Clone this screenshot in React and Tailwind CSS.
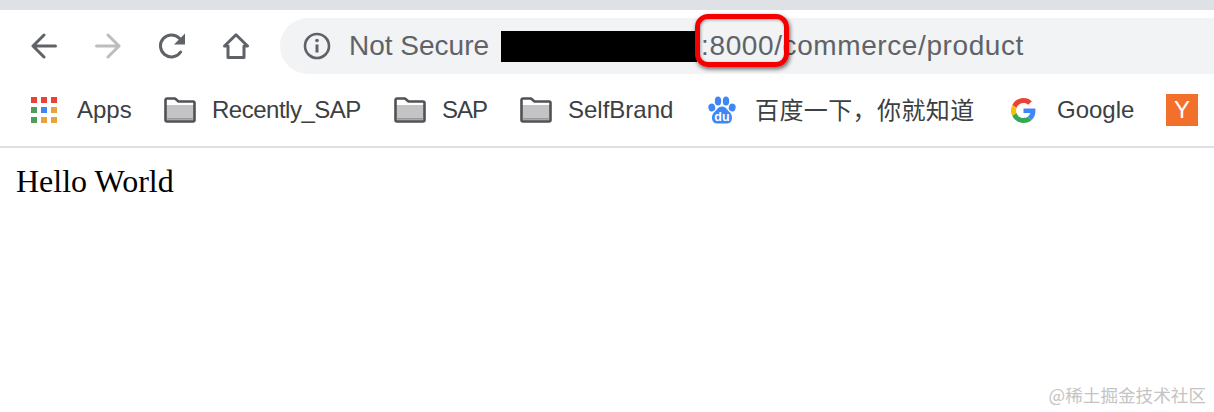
import React from "react";

function NavArrow({ flip, color }) {
    return (
        <svg width="26" height="26" viewBox="0 0 26 26" fill="none" stroke={color} strokeWidth="3" strokeLinecap="round" strokeLinejoin="round" className={flip ? "-scale-x-100" : ""}>
            <path d="M2 13H24.5M13 2L2 13L13 24" />
        </svg>
    );
}

function Folder() {
    return (
        <svg width="32" height="26" viewBox="0 0 32 26" className="shrink-0">
            <path d="M1.5 8H30.5V23A1.5 1.5 0 0 1 29 24.5H3A1.5 1.5 0 0 1 1.5 23Z" fill="#c4c4c4" />
            <path d="M1.5 3A1.5 1.5 0 0 1 3 1.5H11L14.5 4.5H29A1.5 1.5 0 0 1 30.5 6V23A1.5 1.5 0 0 1 29 24.5H3A1.5 1.5 0 0 1 1.5 23Z" fill="none" stroke="#4f5256" strokeWidth="2.6" strokeLinejoin="round" />
            <path d="M2.8 21.8H29.2" stroke="#9a9a9a" strokeWidth="1.6" />
        </svg>
    );
}

function AppsGrid() {
    const colors = ["bg-[#ea4335]", "bg-[#ea4335]", "bg-[#ea4335]", "bg-[#4f9d5d]", "bg-[#4285f4]", "bg-[#e8a33d]", "bg-[#4f9d5d]", "bg-[#e8a33d]", "bg-[#e8a33d]"];
    return (
        <div className="grid grid-cols-3 gap-1 w-[26px] shrink-0">
            {colors.map((c, i) => (
                <div key={i} className={"w-[6px] h-[6px] " + c}></div>
            ))}
        </div>
    );
}

function BaiduIcon() {
    return (
        <svg width="28" height="28" viewBox="0 0 28 28" className="shrink-0">
            <g fill="#3f87f5">
                <ellipse cx="3.8" cy="11.5" rx="3.4" ry="4" transform="rotate(-15 3.8 11.5)" />
                <ellipse cx="10" cy="5" rx="3.2" ry="4.6" />
                <ellipse cx="18" cy="5" rx="3.2" ry="4.6" />
                <ellipse cx="24.2" cy="11.5" rx="3.4" ry="4" transform="rotate(15 24.2 11.5)" />
                <path d="M14 10.5C18 10.5 19 14 22 16.5C25 19 25 27 19.5 27.5H8.5C3 27 3 19 6 16.5C9 14 10 10.5 14 10.5Z" />
            </g>
            <text x="14" y="25" textAnchor="middle" fill="#fff" fontSize="12.5" fontWeight="700" fontFamily="Liberation Sans, sans-serif">du</text>
        </svg>
    );
}

function GoogleIcon() {
    return (
        <svg width="25" height="25" viewBox="0 0 48 48" className="shrink-0">
            <path fill="#EA4335" d="M24 9.5c3.54 0 6.71 1.22 9.21 3.6l6.85-6.85C35.9 2.38 30.47 0 24 0 14.62 0 6.51 5.38 2.56 13.22l7.98 6.19C12.43 13.72 17.74 9.5 24 9.5z" />
            <path fill="#4285F4" d="M46.98 24.55c0-1.57-.15-3.09-.38-4.55H24v9.02h12.94c-.58 2.96-2.26 5.48-4.78 7.18l7.73 6c4.51-4.18 7.09-10.36 7.09-17.65z" />
            <path fill="#FBBC05" d="M10.53 28.59c-.48-1.45-.76-2.99-.76-4.59s.27-3.14.76-4.59l-7.98-6.19C.92 16.46 0 20.12 0 24c0 3.88.92 7.54 2.56 10.78l7.97-6.19z" />
            <path fill="#34A853" d="M24 48c6.48 0 11.93-2.13 15.89-5.81l-7.73-6c-2.15 1.45-4.92 2.3-8.16 2.3-6.26 0-11.57-4.22-13.47-9.91l-7.98 6.19C6.51 42.62 14.62 48 24 48z" />
        </svg>
    );
}

export default function App() {
    return (
        <div className="relative w-[1214px] h-[412px] overflow-hidden bg-white font-['Liberation_Sans',sans-serif]">
            {/* Tab strip edge */}
            <div className="h-[10px] bg-[#dee1e6]"></div>

            {/* Toolbar */}
            <div className="h-[74px] pt-2 pl-[31px] flex items-start">
                <div className="h-14 flex items-center gap-[38px]">
                    <NavArrow color="#5f6368" />
                    <NavArrow flip color="#bcbdbf" />
                    <svg width="28" height="28" viewBox="0 0 28 28" fill="none" className="-ml-px -mr-px">
                        <path d="M22.6 20A11 11 0 1 1 21.6 6.5" stroke="#5f6368" strokeWidth="3" strokeLinecap="round" />
                        <path d="M27 1.5V12.5H16Z" fill="#5f6368" />
                    </svg>
                    <svg width="26" height="26" viewBox="0 0 26 26" fill="none" stroke="#5f6368" strokeWidth="3" strokeLinejoin="round">
                        <path d="M1.5 13L13 1.8L24.5 13H21V24.5H5V13Z" />
                    </svg>
                </div>

                {/* Omnibox */}
                <div className="ml-[31px] flex-1 h-14 rounded-l-[28px] bg-[#f1f3f4] pl-[23px] flex items-center text-[28px] text-[#5f6368]">
                    <svg width="28" height="28" viewBox="0 0 28 28" fill="none" className="shrink-0">
                        <circle cx="14" cy="14" r="12" stroke="#5f6368" strokeWidth="2.6" />
                        <path d="M14 12.5V20.5" stroke="#5f6368" strokeWidth="3" />
                        <circle cx="14" cy="8.5" r="1.8" fill="#5f6368" />
                    </svg>
                    <span className="ml-[18px] whitespace-nowrap">Not Secure</span>
                    <div className="ml-[12px] w-[196px] h-[31px] bg-black shrink-0"></div>
                    <span className="ml-[4px] whitespace-nowrap tracking-[0.6px]">:8000/commerce/product</span>
                </div>
            </div>

            {/* Bookmarks bar */}
            <div className="h-16 pb-[10px] border-b-2 border-[#dfdfe5] pl-[31px] flex items-center text-[24px] text-[#3c4043] whitespace-nowrap">
                <AppsGrid />
                <span className="ml-5 w-[55px]">Apps</span>
                <div className="ml-8"><Folder /></div>
                <span className="ml-4 w-[148px] tracking-[-0.5px]">Recently_SAP</span>
                <div className="ml-[34px]"><Folder /></div>
                <span className="ml-4 w-[46px] tracking-[-1px]">SAP</span>
                <div className="ml-8"><Folder /></div>
                <span className="ml-4 w-[105px]">SelfBrand</span>
                <div className="ml-[35px]"><BaiduIcon /></div>
                <span className="ml-[19px] w-[219px] pb-[2px] tracking-[0.4px] font-['Noto_Sans_CJK_SC',sans-serif]">百度一下，你就知道</span>
                <div className="ml-[37px]"><GoogleIcon /></div>
                <span className="ml-[21px] w-[76px]">Google</span>
                <div className="ml-[33px] w-8 h-8 bg-[#f26f2c] text-white flex items-center justify-center text-[24px] shrink-0">Y</div>
            </div>

            {/* Page body */}
            <div className="px-4 pt-[9px] text-[32px] text-black font-['Liberation_Serif',serif]">Hello World</div>

            {/* Red annotation around the port */}
            <div className="absolute left-[695px] top-[14px] w-[94px] h-[53px] rounded-[13px] border-[5px] border-[#f40000] shadow-[1px_2px_4px_rgba(0,0,0,0.6),inset_1px_1px_3px_rgba(0,0,0,0.35)]"></div>

            {/* Watermark */}
            <div className="absolute right-2 top-[384px] text-[17.6px] leading-[22px] text-[#c4c4c4] font-['Noto_Sans_CJK_SC',sans-serif] whitespace-nowrap">@稀土掘金技术社区</div>
        </div>
    );
}
